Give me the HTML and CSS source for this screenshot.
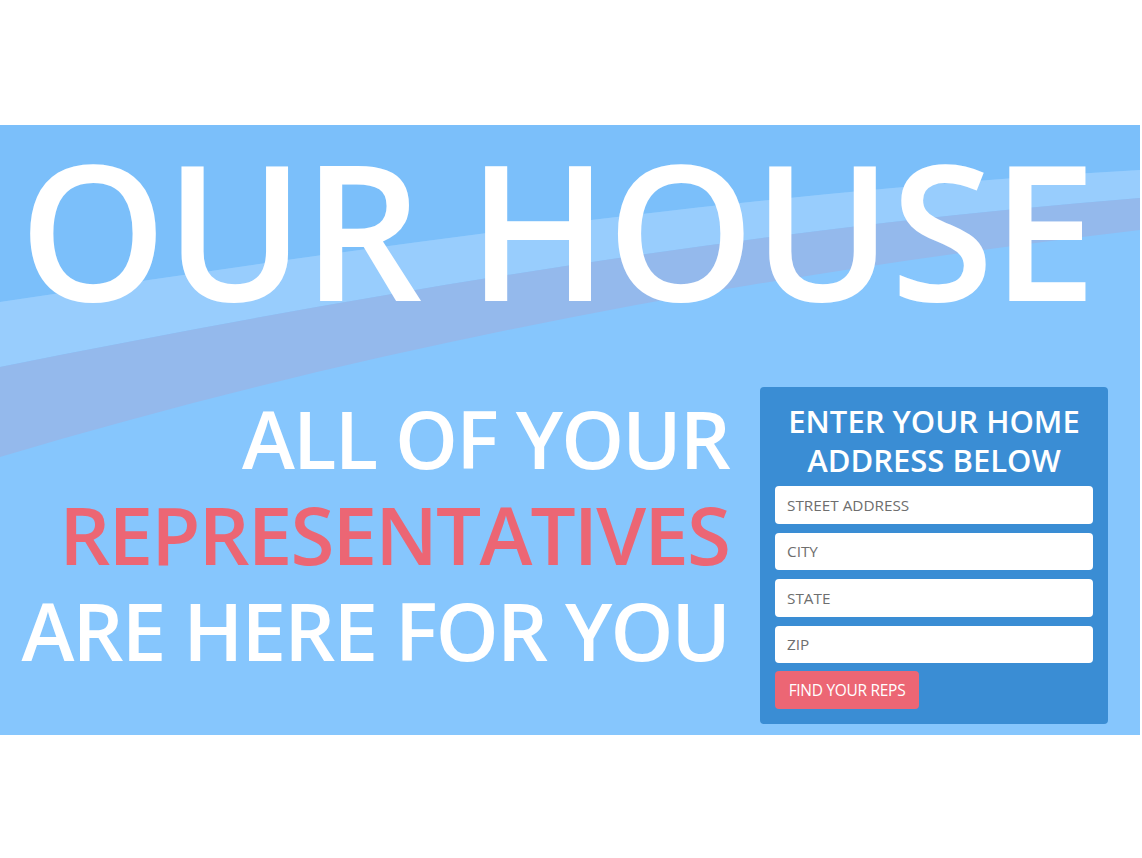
FILE: index.html
```html
<!DOCTYPE html>
<html lang="en">
<head>
<meta charset="utf-8">
<title>Our House</title>
<link rel="stylesheet" href="styles.css">
</head>
<body>
<div class="top-space"></div>
<section class="hero">
  <svg class="bands" width="1140" height="610" viewBox="0 0 1140 610" aria-hidden="true">
    <path fill="#7bbffa" d="M0 0 H1140 V45 C760 66 380 120 0 177 Z"/>
    <path fill="#98cdfd" d="M0 177 C380 120 760 66 1140 45 V73 C760 103 380 166 0 242 Z"/>
    <path fill="#94b9ec" d="M0 242 C380 166 760 103 1140 73 V105 C760 150 380 218 0 332 Z"/>
  </svg>
  <h1 class="title">OUR HOUSE</h1>
  <div class="row">
    <div class="tagline">
      <div class="line">ALL OF YOUR</div>
      <div class="line accent">REPRESENTATIVES</div>
      <div class="line">ARE HERE FOR YOU</div>
    </div>
    <form class="panel">
      <h2 class="panel-title">ENTER YOUR HOME<br>ADDRESS BELOW</h2>
      <input class="field" type="text" placeholder="STREET ADDRESS">
      <input class="field" type="text" placeholder="CITY">
      <input class="field" type="text" placeholder="STATE">
      <input class="field" type="text" placeholder="ZIP">
      <button class="btn" type="button">FIND YOUR REPS</button>
    </form>
  </div>
</section>
</body>
</html>
```

FILE: styles.css
```css
html, body {
  margin: 0;
  padding: 0;
  background: #ffffff;
}
body {
  font-family: "Open Sans", "Noto Sans", sans-serif;
}
.top-space {
  height: 125px;
}
.hero {
  position: relative;
  width: 1140px;
  height: 610px;
  background: #86c6fd;
  overflow: hidden;
}
.bands {
  position: absolute;
  left: 0;
  top: 0;
}
.title {
  position: relative;
  margin: 0;
  padding: 9px 0 0 19px;
  font-size: 188px;
  line-height: 188px;
  font-weight: 600;
  color: #ffffff;
  letter-spacing: -2px;
  white-space: nowrap;
}
.row {
  position: relative;
  display: flex;
  justify-content: flex-end;
  align-items: flex-start;
  gap: 31px;
  padding-right: 32px;
  margin-top: 65px;
}
.tagline {
  text-align: right;
  color: #ffffff;
  font-size: 80px;
  line-height: 96px;
  font-weight: 600;
  letter-spacing: -1.9px;
  white-space: nowrap;
  margin-top: 3px;
}
.accent {
  color: #ec6674;
}
.panel {
  width: 318px;
  padding: 15px 15px 15px 15px;
  background: #3a8dd4;
  border-radius: 4px;
  display: flex;
  flex-direction: column;
  align-items: flex-start;
}
.panel-title {
  margin: 0 0 7px;
  align-self: stretch;
  text-align: center;
  font-size: 31px;
  line-height: 38.5px;
  font-weight: 600;
  color: #ffffff;
}
.field {
  box-sizing: border-box;
  width: 318px;
  height: 37.5px;
  margin: 0 0 9px;
  padding: 0 12px;
  border: none;
  border-radius: 4px;
  background: #ffffff;
  font-family: "Open Sans", sans-serif;
  font-size: 15.3px;
  color: #555;
  outline: none;
}
.field::placeholder {
  color: #6e6e6e;
}
.field:nth-of-type(4) {
  margin-bottom: 8px;
}
.btn {
  height: 37.7px;
  width: 144px;
  padding: 0;
  border: none;
  border-radius: 4px;
  background: #ec6674;
  color: #ffffff;
  font-family: "Open Sans", sans-serif;
  font-size: 15.5px;
  letter-spacing: -0.3px;
  text-align: center;
}
```
